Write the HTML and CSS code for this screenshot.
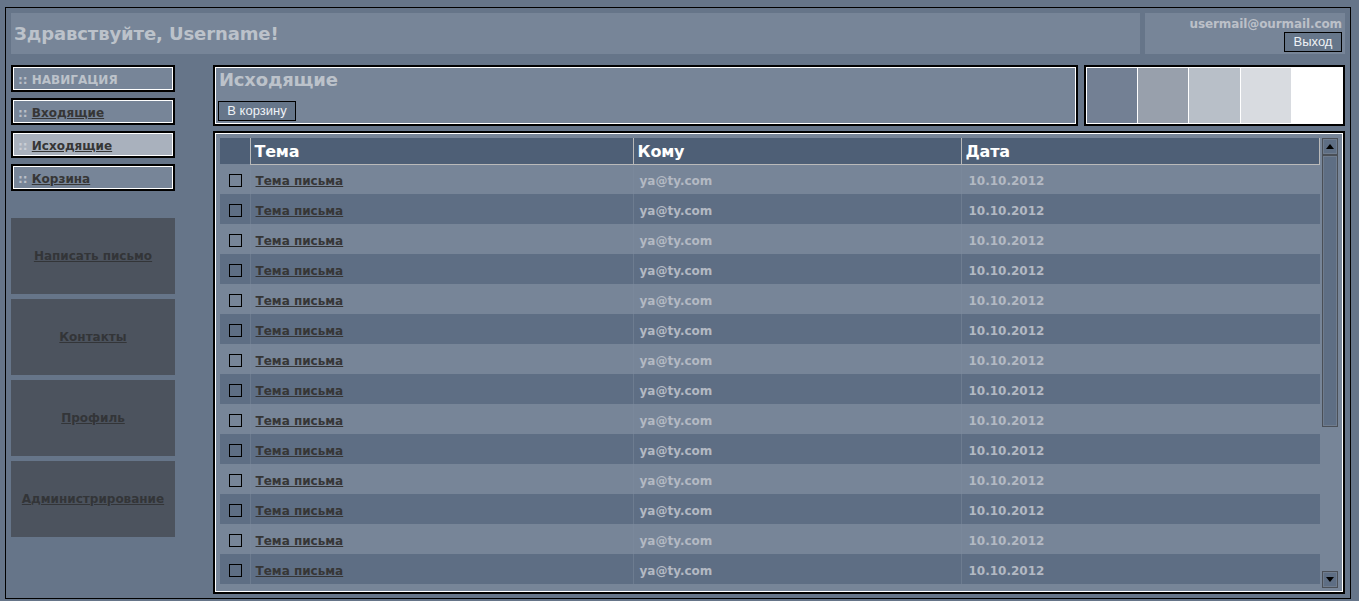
FILE: index.html
```html
<!DOCTYPE html>
<html lang="ru">
<head>
<meta charset="utf-8">
<title>Почта</title>
<link rel="stylesheet" href="styles.css">
</head>
<body>
<div class="frame">
  <header class="top">
    <div class="greet">Здравствуйте, Username!</div>
    <div class="user">
      <div class="mail">usermail@ourmail.com</div>
      <button class="btn">Выход</button>
    </div>
  </header>
  <div class="layout">
    <aside class="side">
      <div class="nav">
        <div class="nav-item"><span class="dots">:: </span><span class="nav-head">НАВИГАЦИЯ</span></div>
        <div class="nav-item"><span class="dots">:: </span><a href="#" class="nav-link">Входящие</a></div>
        <div class="nav-item active"><span class="dots">:: </span><a href="#" class="nav-link">Исходящие</a></div>
        <div class="nav-item"><span class="dots">:: </span><a href="#" class="nav-link">Корзина</a></div>
      </div>
      <div class="bigs">
        <div class="big"><a href="#">Написать письмо</a></div>
        <div class="big"><a href="#">Контакты</a></div>
        <div class="big"><a href="#">Профиль</a></div>
        <div class="big"><a href="#">Администрирование</a></div>
      </div>
    </aside>
    <main class="main">
      <div class="main-top">
        <div class="title-box">
          <h1 class="title">Исходящие</h1>
          <button class="btn">В корзину</button>
        </div>
        <div class="swatches">
          <div class="sw sw1"></div>
          <div class="sw sw2"></div>
          <div class="sw sw3"></div>
          <div class="sw sw4"></div>
          <div class="sw sw5"></div>
        </div>
      </div>
      <div class="list-box">
        <div class="list-scroll">
          <table class="list">
            <thead>
              <tr>
                <th class="c-check"></th>
                <th class="c-subj">Тема</th>
                <th class="c-to">Кому</th>
                <th class="c-date">Дата</th>
              </tr>
            </thead>
            <tbody>
              <tr><td class="c-check"><span class="box"></span></td><td class="c-subj"><a href="#">Тема письма</a></td><td class="c-to">ya@ty.com</td><td class="c-date">10.10.2012</td></tr>
              <tr><td class="c-check"><span class="box"></span></td><td class="c-subj"><a href="#">Тема письма</a></td><td class="c-to">ya@ty.com</td><td class="c-date">10.10.2012</td></tr>
              <tr><td class="c-check"><span class="box"></span></td><td class="c-subj"><a href="#">Тема письма</a></td><td class="c-to">ya@ty.com</td><td class="c-date">10.10.2012</td></tr>
              <tr><td class="c-check"><span class="box"></span></td><td class="c-subj"><a href="#">Тема письма</a></td><td class="c-to">ya@ty.com</td><td class="c-date">10.10.2012</td></tr>
              <tr><td class="c-check"><span class="box"></span></td><td class="c-subj"><a href="#">Тема письма</a></td><td class="c-to">ya@ty.com</td><td class="c-date">10.10.2012</td></tr>
              <tr><td class="c-check"><span class="box"></span></td><td class="c-subj"><a href="#">Тема письма</a></td><td class="c-to">ya@ty.com</td><td class="c-date">10.10.2012</td></tr>
              <tr><td class="c-check"><span class="box"></span></td><td class="c-subj"><a href="#">Тема письма</a></td><td class="c-to">ya@ty.com</td><td class="c-date">10.10.2012</td></tr>
              <tr><td class="c-check"><span class="box"></span></td><td class="c-subj"><a href="#">Тема письма</a></td><td class="c-to">ya@ty.com</td><td class="c-date">10.10.2012</td></tr>
              <tr><td class="c-check"><span class="box"></span></td><td class="c-subj"><a href="#">Тема письма</a></td><td class="c-to">ya@ty.com</td><td class="c-date">10.10.2012</td></tr>
              <tr><td class="c-check"><span class="box"></span></td><td class="c-subj"><a href="#">Тема письма</a></td><td class="c-to">ya@ty.com</td><td class="c-date">10.10.2012</td></tr>
              <tr><td class="c-check"><span class="box"></span></td><td class="c-subj"><a href="#">Тема письма</a></td><td class="c-to">ya@ty.com</td><td class="c-date">10.10.2012</td></tr>
              <tr><td class="c-check"><span class="box"></span></td><td class="c-subj"><a href="#">Тема письма</a></td><td class="c-to">ya@ty.com</td><td class="c-date">10.10.2012</td></tr>
              <tr><td class="c-check"><span class="box"></span></td><td class="c-subj"><a href="#">Тема письма</a></td><td class="c-to">ya@ty.com</td><td class="c-date">10.10.2012</td></tr>
              <tr><td class="c-check"><span class="box"></span></td><td class="c-subj"><a href="#">Тема письма</a></td><td class="c-to">ya@ty.com</td><td class="c-date">10.10.2012</td></tr>
            </tbody>
          </table>
        </div>
        <div class="scrollbar">
          <div class="sb-btn"><svg width="8" height="5" viewBox="0 0 8 5"><path d="M4 0 L8 5 L0 5 Z" fill="#000"/></svg></div>
          <div class="sb-track">
            <div class="sb-thumb"></div>
          </div>
          <div class="sb-btn"><svg width="8" height="5" viewBox="0 0 8 5"><path d="M0 0 L8 0 L4 5 Z" fill="#000"/></svg></div>
        </div>
      </div>
    </main>
  </div>
</div>
</body>
</html>
```

FILE: styles.css
```css
* { box-sizing: border-box; }

html, body {
  margin: 0;
  padding: 0;
  background: #667589;
}

body {
  font-family: "DejaVu Sans", Verdana, sans-serif;
  color: #b9bfc8;
}

.frame {
  margin: 7px 0 0 5px;
  width: 1346px;
  height: 592px;
  border: 1px solid #000;
  padding: 5px;
  background: #667589;
}

/* header */
.top {
  display: flex;
  gap: 5px;
  height: 41px;
}

.greet {
  flex: 1;
  background: #778598;
  display: flex;
  align-items: center;
  padding-left: 3px;
  font-size: 18px;
  font-weight: bold;
  color: #bcc2ca;
  letter-spacing: -0.1px;
}

.user {
  width: 200px;
  background: #778598;
  padding: 3px 3px 2px;
  display: flex;
  flex-direction: column;
  align-items: flex-end;
}

.mail {
  font-size: 12px;
  font-weight: bold;
  line-height: 16px;
  color: #bcc0c8;
  letter-spacing: -0.1px;
}

.btn {
  display: block;
  height: 20px;
  margin: 0;
  padding: 0 8px;
  border: 1px solid #000;
  background: #66768a;
  color: #eef2f6;
  font-family: "Liberation Sans", Arial, sans-serif;
  font-size: 13px;
  line-height: 18px;
}

.user .btn {
  width: 58px;
  padding: 0;
}

/* layout */
.layout {
  display: flex;
  gap: 38px;
  margin-top: 11px;
}

.side {
  width: 164px;
  flex: none;
}

.nav {
  display: flex;
  flex-direction: column;
  gap: 6px;
}

.nav-item {
  height: 27px;
  border: 2px solid #000;
  box-shadow: inset 0 0 0 1px #fff;
  background: #778598;
  padding: 2px 0 0 5px;
  line-height: 22px;
  font-size: 12px;
  font-weight: bold;
  white-space: pre;
}

.nav-item.active {
  background: #a9b1bd;
}

.dots {
  color: #b9bfc8;
}

.nav-item.active .dots {
  color: #c9ced6;
}

.nav-head {
  color: #bcc2ca;
}

.nav-link {
  color: #363636;
  text-decoration: underline;
}

.bigs {
  margin-top: 27px;
  display: flex;
  flex-direction: column;
  gap: 5px;
}

.big {
  height: 76px;
  background: #4c535e;
  display: flex;
  align-items: center;
  justify-content: center;
  font-size: 12px;
  font-weight: bold;
}

.big a {
  color: #333538;
  text-decoration: underline;
}

/* main */
.main {
  flex: 1;
  display: flex;
  flex-direction: column;
  gap: 5px;
}

.main-top {
  display: flex;
  gap: 6px;
  height: 61px;
}

.title-box {
  flex: 1;
  border: 2px solid #000;
  box-shadow: inset 0 0 0 1px #fff;
  background: #778598;
  padding: 2px 3px 0;
}

.title {
  margin: 0;
  padding-left: 1px;
  font-size: 18px;
  line-height: 22px;
  font-weight: bold;
  color: #bcc2ca;
  letter-spacing: -0.2px;
}

.title-box .btn {
  margin-top: 10px;
  width: 78px;
  padding: 0;
}

.swatches {
  width: 261px;
  border: 2px solid #000;
  background: #fff;
  padding: 1px;
  display: flex;
  gap: 1px;
}

.sw { flex: 1; }
.sw1 { background: #738094; }
.sw2 { background: #98a0ac; }
.sw3 { background: #b8bfc8; }
.sw4 { background: #d8dbe0; }
.sw5 { background: #ffffff; }

.list-box {
  height: 463px;
  border: 2px solid #000;
  box-shadow: inset 0 0 0 1px #fff;
  background: #778598;
  padding: 5px 5px 4px;
  display: flex;
  gap: 2px;
}

.list-scroll {
  flex: 1;
  overflow: hidden;
}

.list {
  width: 1100px;
  border-collapse: collapse;
  table-layout: fixed;
}

.list th {
  height: 26px;
  background: #4e5f76;
  color: #ffffff;
  font-size: 16px;
  font-weight: bold;
  text-align: left;
  padding: 1px 0 0 4px;
  border-left: 1px solid #b9b9b9;
  border-bottom: 1px solid #b9b9b9;
  letter-spacing: -0.2px;
}

.list th.c-check {
  border-left: none;
  border-bottom: none;
  padding: 0;
}

.list th.c-date {
  border-right: 1px solid #b9b9b9;
}

.c-check { width: 30px; }
.c-subj { width: 383px; }
.c-to { width: 328px; }

.list td {
  height: 30px;
  padding: 3px 0 0 7px;
  font-size: 12px;
  font-weight: bold;
  color: #b3b9c3;
  border-left: 1px solid #6d7c90;
  vertical-align: middle;
}

.list td.c-check {
  border-left: none;
  padding: 1px 0 0 1px;
  text-align: center;
}

.list td.c-subj {
  padding-left: 5px;
}

.list td.c-to {
  padding-left: 6px;
}

.list td a {
  color: #363636;
  text-decoration: underline;
}

.list tbody tr:nth-child(odd) { background: #778598; }
.list tbody tr:nth-child(even) { background: #5e6e84; }
.list tbody tr:nth-child(odd) td { border-left-color: #7a889b; }

.box {
  display: inline-block;
  width: 13px;
  height: 13px;
  border: 1px solid #000;
  vertical-align: middle;
}

.scrollbar {
  width: 16px;
  display: flex;
  flex-direction: column;
}

.sb-btn {
  height: 17px;
  border: 1px solid #4a4f57;
  box-shadow: inset 0 0 0 1px #6f7c8e;
  background: #5e6e84;
  display: flex;
  align-items: center;
  justify-content: center;
}

.sb-track {
  flex: 1;
  padding: 0;
}

.sb-thumb {
  height: 272px;
  border: 1px solid #4a4f57;
  box-shadow: inset 0 0 0 1px #6f7c8e;
  background: #5e6e84;
}
```
